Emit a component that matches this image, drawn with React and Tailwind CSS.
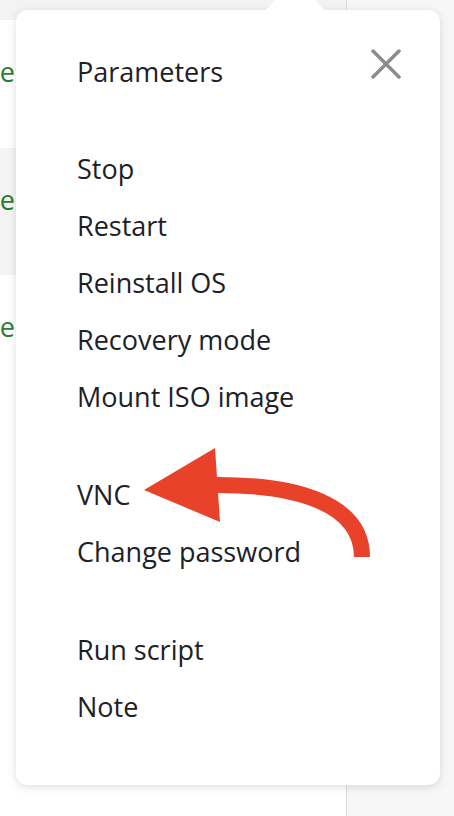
import React from 'react';

const groups = [
    ['Parameters'],
    ['Stop', 'Restart', 'Reinstall OS', 'Recovery mode', 'Mount ISO image'],
    ['VNC', 'Change password'],
    ['Run script', 'Note'],
];

function StatusCell({ gray }) {
    return (
        <div className={gray ? 'h-[127px] bg-[#f4f4f4]' : 'h-[128px] bg-white'}>
            <div className="w-[15px] overflow-hidden flex justify-end pt-[34px]">
                <span className="text-[27px] leading-[36px] text-[#2e7d32] whitespace-nowrap">Active</span>
            </div>
        </div>
    );
}

function CloseIcon() {
    return (
        <svg width="30" height="30" viewBox="0 0 30 30" fill="none">
            <path d="M2 2 L28 28 M28 2 L2 28" stroke="#8c8c8c" strokeWidth="3.5" strokeLinecap="round" />
        </svg>
    );
}

function RedArrow() {
    return (
        <svg className="absolute left-0 top-0 pointer-events-none" width="454" height="816" viewBox="0 0 454 816" fill="none">
            <path d="M212 485 C300 484, 362 505, 362 557" stroke="#e8432a" strokeWidth="16" />
            <polygon points="144,490 215,448 220,522" fill="#e8432a" />
        </svg>
    );
}

export default function App() {
    return (
        <div className="relative h-[816px] w-[454px] overflow-hidden bg-white" style={{ fontFamily: '"Open Sans", "Noto Sans", sans-serif' }}>
            {/* page behind the popover */}
            <div className="flex h-full">
                <div className="w-[347px] border-r border-[#d9d9d9] flex flex-col">
                    <div className="h-[20px] bg-[#f3f3f3]" />
                    <StatusCell />
                    <StatusCell gray />
                    <StatusCell />
                </div>
                <div className="flex-1 bg-[#f7f7f7]" />
            </div>

            {/* popover */}
            <div className="absolute left-[16px] top-[10px] w-[424px] rounded-[12px] bg-white shadow-[0_2px_10px_rgba(0,0,0,0.13)]">
                <div className="absolute left-[258px] top-[-21px] w-[42px] h-[42px] rotate-45 bg-white rounded-[3px]" />
                <button className="absolute right-[39px] top-[39px]">
                    <CloseIcon />
                </button>
                <div className="relative flex flex-col pl-[61px] pt-[33px] pb-[50px]">
                    {groups.map((items, i) => (
                        <ul key={i} className={i === 0 ? 'flex flex-col' : i === 1 ? 'flex flex-col mt-[40px]' : 'flex flex-col mt-[41px]'}>
                            {items.map((label) => (
                                <li key={label} className="text-[27px] leading-[57px] text-[#1c2126]">
                                    {label}
                                </li>
                            ))}
                        </ul>
                    ))}
                </div>
            </div>

            <RedArrow />
        </div>
    );
}
